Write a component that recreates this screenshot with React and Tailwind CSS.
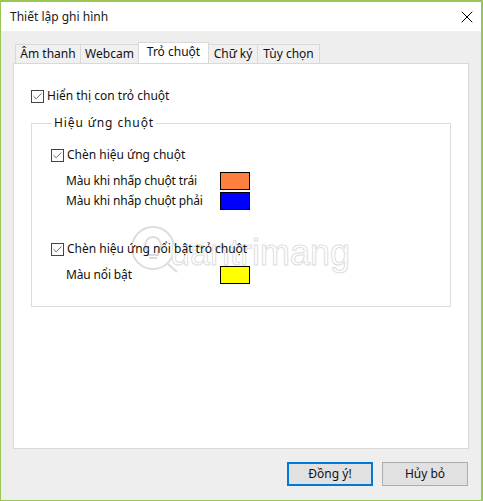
import { X, Check } from 'lucide-react';

const font = "font-['Noto_Sans',sans-serif]";

function CheckRow({ label, className = '' }) {
  return (
    <label className={`relative z-10 flex items-center gap-[3px] h-[14px] ${className}`}>
      <span className="flex items-center justify-center w-[13px] h-[13px] border border-[#444] bg-white">
        <Check size={11} strokeWidth={1.6} className="text-[#333]" />
      </span>
      <span className="text-[12px] leading-[14px] text-[#111] whitespace-nowrap">{label}</span>
    </label>
  );
}

function ColorRow({ label, color, className = '' }) {
  return (
    <div className={`relative z-10 flex items-center h-[18px] ml-[15px] ${className}`}>
      <span className="w-[154px] text-[12px] text-[#111] tracking-[-0.15px] whitespace-nowrap">{label}</span>
      <span className={`w-[30px] h-[18px] border border-black ${color}`} />
    </div>
  );
}

const tabs = [
  { name: 'Âm thanh', width: 'w-[66px]' },
  { name: 'Webcam', width: 'w-[59px]' },
  { name: 'Trỏ chuột', width: 'w-[71px]' },
  { name: 'Chữ ký', width: 'w-[50px]' },
  { name: 'Tùy chọn', width: 'w-[63px]' },
];

export default function App() {
  return (
    <div className={`relative flex flex-col w-[483px] h-[501px] border border-[#9bc653] border-t-2 border-r-2 bg-[#eeeeee] overflow-hidden ${font}`}>
      <div className="flex items-center justify-between h-[29px] shrink-0 bg-white pl-[9px] pr-[4px]">
        <span className="text-[12px] text-[#1a1a1a]">Thiết lập ghi hình</span>
        <X size={20} strokeWidth={1.2} className="text-black" />
      </div>

      {/* tabs */}
      <div className="flex items-end h-[32px] shrink-0 pl-[14px]">
        {tabs.map((tab) => {
          const active = tab.name === 'Trỏ chuột';
          return (
            <div
              key={tab.name}
              className={`flex items-center justify-center border border-[#d9d9d9] border-b-0 -mr-px text-[12px] text-[#111] whitespace-nowrap ${tab.width} ${
                active ? 'relative z-10 h-[21px] bg-white pb-[3px]' : 'h-[19px] bg-[#f0f0f0]'
              }`}
            >
              {tab.name}
            </div>
          );
        })}
      </div>

      {/* panel */}
      <div className="ml-[12px] w-[456px] h-[386px] shrink-0 bg-white border border-[#d9d9d9] pt-[25px] pl-[17px]">
        <CheckRow label="Hiển thị con trỏ chuột" />
        <fieldset className="w-[420px] h-[191px] mt-[13px] border border-[#dcdcdc] pl-[19px]">
          <legend className="ml-[1px] px-[2px] text-[12px] leading-[14px] text-[#111] tracking-[0.9px]">Hiệu ứng chuột</legend>
          <CheckRow label="Chèn hiệu ứng chuột" className="mt-[18px]" />
          <ColorRow label="Màu khi nhấp chuột trái" color="bg-[#ff7f3f]" className="mt-[10px]" />
          <ColorRow label="Màu khi nhấp chuột phải" color="bg-[#0000ff]" className="mt-[2px]" />
          <CheckRow label="Chèn hiệu ứng nổi bật trỏ chuột" className="mt-[32px]" />
          <ColorRow label="Màu nổi bật" color="bg-[#ffff00]" className="mt-[10px]" />
        </fieldset>
      </div>

      {/* footer buttons */}
      <div className="flex justify-end gap-[9px] mt-[13px] pr-[13px]">
        <button className="w-[86px] h-[24px] border-2 border-[#0078d7] bg-[#e1e1e1] text-[12px] text-[#111]">Đồng ý!</button>
        <button className="w-[86px] h-[24px] border border-[#adadad] bg-[#e1e1e1] text-[12px] text-[#111]">Hủy bỏ</button>
      </div>

      {/* watermark */}
      <div className="absolute left-[129px] top-[218px] flex items-start pointer-events-none">
        <svg width="60" height="60" viewBox="0 0 60 60" fill="none" stroke="#dcdcdc" strokeWidth="2" className="-mr-[20px]">
          <circle cx="23" cy="28" r="21" />
          <path d="M23 17a8 8 0 0 0-5 14v4h10v-4a8 8 0 0 0-5-14zM19 38h8M38 44l9 8" />
        </svg>
        <span className="mt-[15px] text-[36px] leading-none text-white [-webkit-text-stroke:1px_#dedede] font-['Liberation_Sans',sans-serif]">uantrimang</span>
      </div>
    </div>
  );
}
